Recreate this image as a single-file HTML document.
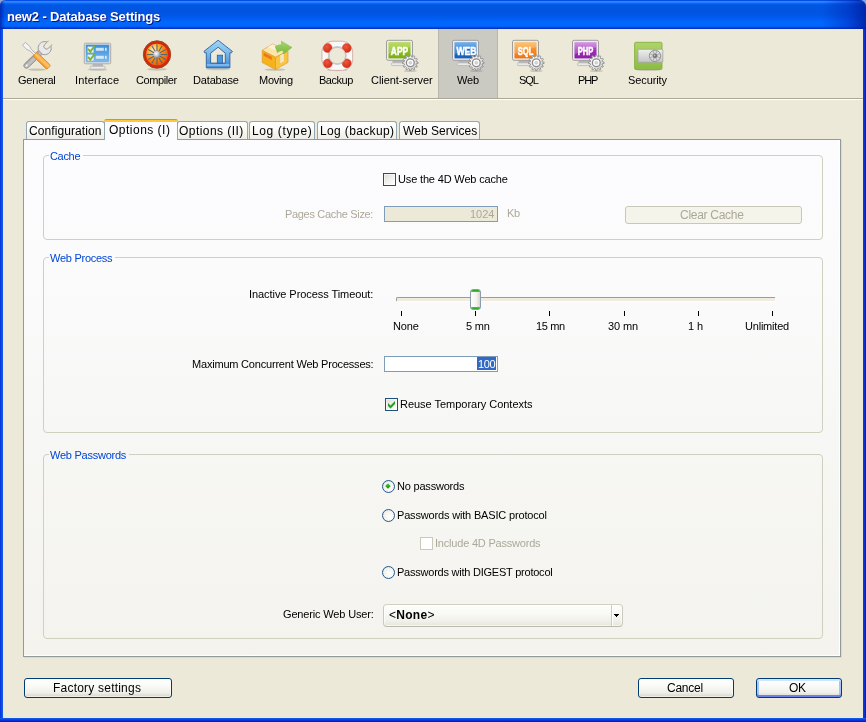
<!DOCTYPE html>
<html><head><meta charset="utf-8"><title>new2 - Database Settings</title>
<style>
html,body{margin:0;padding:0;}
body{width:866px;height:722px;position:relative;overflow:hidden;background:#ECE9D8;font-family:"Liberation Sans",sans-serif;}
.abs,.t{position:absolute;}
.t{white-space:nowrap;line-height:16px;height:16px;will-change:transform;}
.t span{display:inline-block;}
#title{left:0;top:0;width:866px;height:29px;border-radius:6px 6px 0 0;
 background:linear-gradient(180deg,#0046E0 0px,#0A55E8 1px,#3A90FF 1.6px,#2480FF 2.4px,#0A6CF8 3.2px,#0060EE 4px,#0056E2 5.5px,#0054E0 13px,#0059EC 17px,#0062F8 20px,#0066FC 22px,#0066FC 26.2px,#0050E4 27.2px,#0034C8 28.2px,#0030C4 29px);}
#titleR{left:822px;top:0;width:44px;height:29px;border-radius:0 7px 0 0;background:linear-gradient(90deg,rgba(0,40,190,0) 0%,rgba(0,40,185,.5) 60%,rgba(0,30,160,.85) 100%);}
#titleL{left:0;top:0;width:5px;height:29px;border-radius:7px 0 0 0;background:linear-gradient(90deg,rgba(0,30,170,.8),rgba(0,40,190,0));}
#bl{left:0;top:29px;width:3px;height:693px;background:linear-gradient(90deg,#0831D9,#0A4BE4 50%,#1660E8);}
#br{left:863px;top:29px;width:3px;height:693px;background:linear-gradient(90deg,#0A3FD8,#0831D9 50%,#001EA0);}
#bb{left:0;top:718px;width:866px;height:4px;background:linear-gradient(180deg,#1660E8,#0A4BE4 30%,#0831D9 60%,#001EA0);}
#sep1{left:3px;top:98px;width:860px;height:1px;background:#ACA899;}
#sep2{left:3px;top:99px;width:860px;height:1px;background:#fff;}
#sel{left:438px;top:29px;width:60px;height:69px;background:#CBCAC2;box-shadow:inset 1px 0 0 #B8B7AE,inset -1px 0 0 #B8B7AE;}
.ico{position:absolute;top:40px;width:32px;height:32px;overflow:visible;}
/* tabs */
.tab{position:absolute;top:121px;height:19px;box-sizing:border-box;border:1px solid #91A7B4;border-bottom:none;border-radius:3px 3px 0 0;
 background:linear-gradient(180deg,#FFFFFF 0%,#FBFBF8 40%,#F1F0EA 80%,#ECEBE5 100%);}
.tab.act{top:119px;height:21px;background:#FCFCFE;border-top:none;z-index:3;}
.tab.act:before{content:"";position:absolute;left:-1px;right:-1px;top:0;height:3px;border-radius:3px 3px 0 0;
 background:linear-gradient(180deg,#E68B2C 0,#E68B2C 33%,#FFC73C 34%,#FFC73C 100%);}
#panel{left:23px;top:139px;width:818px;height:518px;box-sizing:border-box;border:1px solid #919B9C;
 background:linear-gradient(180deg,#FCFCFE 0%,#FBFBFC 25%,#F7F7F5 55%,#F4F3EE 100%);z-index:2;box-shadow:inset -1px -1px 0 #fff,1px 1px 0 rgba(120,110,80,.12);}
.grp{position:absolute;left:43px;width:780px;box-sizing:border-box;border:1px solid #D0D0BF;border-radius:4px;z-index:2;}
.gl{position:absolute;height:3px;z-index:2;}
.z{z-index:4;}
.t{z-index:5;}
.cb{position:absolute;width:13px;height:13px;box-sizing:border-box;border:1px solid #1C5180;
 background:linear-gradient(135deg,#DCDCD7 0%,#F0F0EC 50%,#FFFFFF 100%);z-index:4;box-shadow:inset 0 0 0 1px rgba(255,255,255,.55);}
.cb.dis{border-color:#CAC8BB;background:#fff;}
.rb{position:absolute;width:13px;height:13px;box-sizing:border-box;border:1px solid #24578C;border-radius:50%;
 background:radial-gradient(circle at 60% 60%,#FFFFFF 0%,#F4F4F0 50%,#DCDCD7 100%);z-index:4;}
.inp{position:absolute;box-sizing:border-box;border:1px solid #7F9DB9;background:#fff;z-index:4;}
.btn{position:absolute;box-sizing:border-box;border:1px solid #003C74;border-radius:3px;z-index:4;
 background:linear-gradient(180deg,#FFFFFF 0%,#FBFBF9 30%,#F0F0EA 75%,#E3E0D5 90%,#D6D0C5 100%);box-shadow:inset 0 0 0 1px rgba(255,255,255,.6);}
.btn.def{box-shadow:inset 0 2px 0 #CEE7FF,inset 0 -2px 0 #6982EE,inset 2px 0 0 #A9C4F2,inset -2px 0 0 #A9C4F2;}
.btn.dis{border-color:#C9C7BA;background:#F5F4EA;box-shadow:none;}
.crn{position:absolute;top:0;width:6px;height:6px;background:#8FA4D6;}

</style></head><body>
<div class="crn" style="left:0"></div><div class="crn" style="left:860px"></div><div id="title" class="abs"></div><div id="titleR" class="abs"></div><div id="titleL" class="abs"></div>
<div id="bl" class="abs"></div><div id="br" class="abs"></div><div id="bb" class="abs"></div>
<div id="sel" class="abs"></div>
<div id="sep1" class="abs"></div><div id="sep2" class="abs"></div>
<svg class="abs" id="icons" width="866" height="100" viewBox="0 0 866 100" style="left:0;top:0;z-index:1;will-change:transform"><defs>
<linearGradient id="gGear" x1="0" y1="0" x2="1" y2="1"><stop offset="0" stop-color="#FFFFFF"/><stop offset=".6" stop-color="#E6E6E6"/><stop offset="1" stop-color="#BEBEBE"/></linearGradient>
<linearGradient id="gApp" x1="0" y1="0" x2="0" y2="1"><stop offset="0" stop-color="#A6D233"/><stop offset=".5" stop-color="#8FBE1E"/><stop offset="1" stop-color="#7BAE14"/></linearGradient>
<linearGradient id="gWeb" x1="0" y1="0" x2="0" y2="1"><stop offset="0" stop-color="#4A9AE8"/><stop offset=".45" stop-color="#2070C8"/><stop offset="1" stop-color="#185EB4"/></linearGradient>
<linearGradient id="gSql" x1="0" y1="0" x2="0" y2="1"><stop offset="0" stop-color="#FBB347"/><stop offset=".5" stop-color="#F58A22"/><stop offset="1" stop-color="#EE7414"/></linearGradient>
<linearGradient id="gPhp" x1="0" y1="0" x2="0" y2="1"><stop offset="0" stop-color="#C77BDC"/><stop offset=".5" stop-color="#A030B8"/><stop offset="1" stop-color="#8E1CA8"/></linearGradient>
<linearGradient id="gScr" x1="0" y1="0" x2="0" y2="1"><stop offset="0" stop-color="#3A8EDC"/><stop offset="1" stop-color="#7DBAEA"/></linearGradient>
<linearGradient id="gHouse" x1="0" y1="0" x2="0" y2="1"><stop offset="0" stop-color="#9FD6F6"/><stop offset=".45" stop-color="#7CBBEC"/><stop offset="1" stop-color="#3B86D4"/></linearGradient>
<linearGradient id="gOr" x1="0" y1="0" x2="1" y2="0"><stop offset="0" stop-color="#F7A23A"/><stop offset=".5" stop-color="#FFBE62"/><stop offset="1" stop-color="#F09020"/></linearGradient>
<linearGradient id="gWr" x1="0" y1="0" x2="0" y2="1"><stop offset="0" stop-color="#B4B4B4"/><stop offset=".5" stop-color="#C6C6C6"/><stop offset="1" stop-color="#9A9A9A"/></linearGradient>
<radialGradient id="gComp" cx=".36" cy=".3" r=".8"><stop offset="0" stop-color="#FFEEDC"/><stop offset=".25" stop-color="#FFC040"/><stop offset=".5" stop-color="#FC8A0C"/><stop offset="1" stop-color="#E84A04"/></radialGradient>
<radialGradient id="gBall" cx=".4" cy=".35" r=".7"><stop offset="0" stop-color="#FFFFFF"/><stop offset=".5" stop-color="#C8CCD0"/><stop offset="1" stop-color="#70787E"/></radialGradient>
<linearGradient id="gSec" x1="0" y1="0" x2="0" y2="1"><stop offset="0" stop-color="#AED468"/><stop offset="1" stop-color="#8CBC44"/></linearGradient>
<linearGradient id="gSafe" x1="0" y1="0" x2="0" y2="1"><stop offset="0" stop-color="#F0F0F0"/><stop offset="1" stop-color="#C4C4C4"/></linearGradient>
<linearGradient id="gArrow" x1="0" y1="0" x2="0" y2="1"><stop offset="0" stop-color="#A5D66C"/><stop offset="1" stop-color="#78B83E"/></linearGradient>
<radialGradient id="gRed" cx=".4" cy=".35" r=".8"><stop offset="0" stop-color="#F0553C"/><stop offset="1" stop-color="#C8240E"/></radialGradient>
<linearGradient id="gOrV" x1="0" y1="0" x2="0" y2="1"><stop offset="0" stop-color="#F9A840"/><stop offset=".45" stop-color="#FFC46C"/><stop offset="1" stop-color="#F08C1C"/></linearGradient></defs><ellipse cx="37" cy="69.6" rx="9" ry="1.2" fill="#6b6858" opacity=".3"/><g transform="rotate(-45 44.4 48.4)"></g><g transform="translate(44.4 48.4) rotate(136.2)"><rect x="3" y="-2.6" width="24.5" height="5.2" rx="2.6" fill="url(#gWr)" stroke="#8A8A8A" stroke-width=".8"/><circle cx="24.6" cy="0" r="1.1" fill="#F2F2F2"/><path d="M5.5 -3 A6.6 6.6 0 1 0 5.5 3 Z" fill="#E9E9E9" stroke="#9A9A9A" stroke-width=".9"/><path d="M-8 -2.6 L-2.2 -2.6 A2.7 2.7 0 0 1 -2.2 2.6 L-8 2.6 Z" fill="#ECE9D8" stroke="#9A9A9A" stroke-width=".9"/><rect x="-9" y="-2.1" width="3.2" height="4.2" fill="#ECE9D8"/></g><g transform="translate(24 43.8) rotate(43.7)"><path d="M0 -2.1 L6 -2.1 L9 -1 L16 -1 L16 1 L9 1 L6 2.1 L0 2.1 Z" fill="#F4F4F4" stroke="#A8A8A8" stroke-width=".8"/><rect x="15" y="-2.8" width="19.3" height="5.6" rx="1.6" fill="url(#gOrV)" stroke="#E48A1E" stroke-width=".8"/></g><ellipse cx="97.5" cy="69.6" rx="10" ry="1.2" fill="#6b6858" opacity=".28"/><rect x="92.5" y="64" width="10.5" height="3" fill="#B8B8B8"/><rect x="90.2" y="66.3" width="14.8" height="2.8" rx=".8" fill="#ECECEC" stroke="#ADADAD" stroke-width=".7"/><rect x="84.3" y="43.2" width="26.4" height="20.6" rx="1" fill="#E4E0DC" stroke="#B3AAA4" stroke-width="1"/><rect x="85.8" y="44.7" width="23.4" height="17.6" fill="url(#gScr)"/><rect x="87.6" y="46.6" width="6" height="6" fill="#F2F2F2"/><path d="M88 48.800000000000004 L90.3 51.6 L94.6 46.0" fill="none" stroke="#7DB432" stroke-width="1.9"/><rect x="95.8" y="47.800000000000004" width="8" height="3" fill="#fff" opacity=".72"/><rect x="105" y="47.800000000000004" width="1.6" height="3" fill="#fff" opacity=".8"/><rect x="87.6" y="54.6" width="6" height="6" fill="#F2F2F2"/><path d="M88 56.800000000000004 L90.3 59.6 L94.6 54.0" fill="none" stroke="#7DB432" stroke-width="1.9"/><rect x="95.8" y="55.800000000000004" width="8" height="3" fill="#fff" opacity=".72"/><rect x="105" y="55.800000000000004" width="1.6" height="3" fill="#fff" opacity=".8"/><ellipse cx="157" cy="69.3" rx="10" ry="1.4" fill="#6b6858" opacity=".28"/><circle cx="157" cy="54.5" r="13.7" fill="#B83608" stroke="#A8441A" stroke-width="1"/><circle cx="157" cy="54.5" r="11.6" fill="url(#gComp)" stroke="#E2201A" stroke-width="1.5"/><line x1="160.40" y1="54.50" x2="167.20" y2="54.50" stroke="#56687A" stroke-width="1.15"/><line x1="159.94" y1="56.20" x2="165.83" y2="59.60" stroke="#56687A" stroke-width="1.15"/><line x1="158.70" y1="57.44" x2="162.10" y2="63.33" stroke="#56687A" stroke-width="1.15"/><line x1="157.00" y1="57.90" x2="157.00" y2="64.70" stroke="#56687A" stroke-width="1.15"/><line x1="155.30" y1="57.44" x2="151.90" y2="63.33" stroke="#56687A" stroke-width="1.15"/><line x1="154.06" y1="56.20" x2="148.17" y2="59.60" stroke="#56687A" stroke-width="1.15"/><line x1="153.60" y1="54.50" x2="146.80" y2="54.50" stroke="#56687A" stroke-width="1.15"/><line x1="154.06" y1="52.80" x2="148.17" y2="49.40" stroke="#56687A" stroke-width="1.15"/><line x1="155.30" y1="51.56" x2="151.90" y2="45.67" stroke="#56687A" stroke-width="1.15"/><line x1="157.00" y1="51.10" x2="157.00" y2="44.30" stroke="#56687A" stroke-width="1.15"/><line x1="158.70" y1="51.56" x2="162.10" y2="45.67" stroke="#56687A" stroke-width="1.15"/><line x1="159.94" y1="52.80" x2="165.83" y2="49.40" stroke="#56687A" stroke-width="1.15"/><circle cx="156.8" cy="54.6" r="3.3" fill="url(#gBall)"/><ellipse cx="218" cy="69" rx="12" ry="1.3" fill="#6b6858" opacity=".25"/><path fill-rule="evenodd" d="M218.1 40.2 L232.4 51.4 L231.5 52.8 L229.9 52.8 L229.9 67.8 L206.3 67.8 L206.3 52.8 L204.7 52.8 L203.9 51.4 Z M218.1 47.2 L210.6 53.2 L210.6 63.1 L225.3 63.1 L225.3 53.2 Z" fill="url(#gHouse)" stroke="#2F5F9F" stroke-width=".9" stroke-linejoin="round"/><rect x="206.9" y="64" width="22.4" height="2.2" fill="#8CC4F0" opacity=".75"/><rect x="217.3" y="55.2" width="5.3" height="7.9" fill="#4C98DE" stroke="#2F5F9F" stroke-width=".8"/><ellipse cx="275" cy="69.6" rx="10.5" ry="1.2" fill="#6b6858" opacity=".3"/><path d="M262.2 50.4 L272.6 44 L288 51 L275.5 57.3 Z" fill="#FBE6A8" stroke="#D9972A" stroke-width=".6"/><path d="M267.6 47.2 L272.6 44.2 L285 50 L280.3 52.5 Z" fill="#FBF0DA"/><path d="M262.2 50.4 L275.5 57.3 L275.5 69.6 L262.2 62.6 Z" fill="#F6B21C" stroke="#DE9622" stroke-width=".6"/><path d="M275.5 57.3 L288 51 L288 62.4 L275.5 69.6 Z" fill="#F9C440" stroke="#DE9622" stroke-width=".6"/><path d="M263.6 52.6 L271.8 56.8 L271.8 60 L263.6 55.8 Z" fill="#F0761C"/><path d="M280.2 55.2 L283.8 53.4 L283.8 61.4 L280.2 63.2 Z" fill="#F1E6CC"/><path d="M275.2 46.6 Q278 44.6 281.6 44.8 L281.4 41.2 L292 47.4 L283.4 54 L283 50.4 Q279.4 50.6 277.4 52.6 Z" fill="url(#gArrow)" stroke="#86BE54" stroke-width=".6"/><ellipse cx="337.5" cy="70" rx="10" ry="1.2" fill="#6b6858" opacity=".28"/><path fill-rule="evenodd" d="M332 41.2 H342.6 Q348 41.8 350.6 45.4 Q352.6 48.4 352.7 52 V59.6 Q352.4 63.6 350.4 66.4 Q347.6 70 342.6 70.4 H332 Q327 70 324.2 66.4 Q322.2 63.6 321.9 59.6 V52 Q322 48.4 324 45.4 Q326.6 41.8 332 41.2 Z M337.3 47.3 A8.3 8.3 0 1 0 337.31 47.3 Z" fill="#F8F8F8" stroke="#D2A8A0" stroke-width=".9"/><circle cx="337.3" cy="55.6" r="8.9" fill="none" stroke="#C4CACC" stroke-width="1.2"/><clipPath id="cpRing"><path clip-rule="evenodd" d="M332 41.2 H342.6 Q348 41.8 350.6 45.4 Q352.6 48.4 352.7 52 V59.6 Q352.4 63.6 350.4 66.4 Q347.6 70 342.6 70.4 H332 Q327 70 324.2 66.4 Q322.2 63.6 321.9 59.6 V52 Q322 48.4 324 45.4 Q326.6 41.8 332 41.2 Z M337.3 46.9 A8.7 8.7 0 1 0 337.31 46.9 Z"/></clipPath><g clip-path="url(#cpRing)"><circle cx="327.6" cy="48" r="4.5" fill="url(#gRed)" stroke="#DC5038" stroke-width=".6"/><circle cx="346.8" cy="48" r="4.5" fill="url(#gRed)" stroke="#DC5038" stroke-width=".6"/><circle cx="327.8" cy="63.4" r="4.5" fill="url(#gRed)" stroke="#DC5038" stroke-width=".6"/><circle cx="346.8" cy="63.4" r="4.5" fill="url(#gRed)" stroke="#DC5038" stroke-width=".6"/></g><rect x="392.5" y="60" width="12.5" height="3.2" fill="#B4B4B4"/><rect x="391.5" y="62.8" width="14" height="2.8" rx=".8" fill="#E9E9E9" stroke="#B0B0B0" stroke-width=".7"/><rect x="386.5" y="40.3" width="26" height="20" rx="1.6" fill="#EDEDED" stroke="#9E9E9E" stroke-width="1"/><rect x="388.5" y="42.2" width="22" height="16.2" fill="url(#gApp)"/><path d="M388.5 42.2 h22 v5 q-11 1.5 -22 7 Z" fill="#fff" opacity=".22"/><text x="399.5" y="54.6" font-family="Liberation Sans, sans-serif" font-weight="700" font-size="11.4" fill="#fff" stroke="#fff" stroke-width=".55" text-anchor="middle" textLength="17.3" lengthAdjust="spacingAndGlyphs">APP</text><ellipse cx="410.3" cy="71.0" rx="6.5" ry="1.1" fill="#6b6858" opacity=".28"/><path d="M416.32 61.85 L418.07 62.11 L418.07 63.49 L416.32 63.75 L415.99 64.99 L417.37 66.08 L416.68 67.29 L415.04 66.64 L414.14 67.54 L414.79 69.18 L413.58 69.87 L412.49 68.49 L411.25 68.82 L410.99 70.57 L409.61 70.57 L409.35 68.82 L408.11 68.49 L407.02 69.87 L405.81 69.18 L406.46 67.54 L405.56 66.64 L403.92 67.29 L403.23 66.08 L404.61 64.99 L404.28 63.75 L402.53 63.49 L402.53 62.11 L404.28 61.85 L404.61 60.61 L403.23 59.52 L403.92 58.31 L405.56 58.96 L406.46 58.06 L405.81 56.42 L407.02 55.73 L408.11 57.11 L409.35 56.78 L409.61 55.03 L410.99 55.03 L411.25 56.78 L412.49 57.11 L413.58 55.73 L414.79 56.42 L414.14 58.06 L415.04 58.96 L416.68 58.31 L417.37 59.52 L415.99 60.61Z" fill="url(#gGear)" stroke="#8E8E8E" stroke-width=".9" stroke-linejoin="round"/><circle cx="410.3" cy="62.8" r="3.9" fill="#FDFDFD" stroke="#8A8A8A" stroke-width="1.3"/><circle cx="410.3" cy="62.8" r="1.5" fill="#D6D6D2" stroke="#BDBDBD" stroke-width=".5"/><rect x="458.5" y="60" width="12.5" height="3.2" fill="#B4B4B4"/><rect x="457.5" y="62.8" width="14" height="2.8" rx=".8" fill="#E9E9E9" stroke="#B0B0B0" stroke-width=".7"/><rect x="452.5" y="40.3" width="26" height="20" rx="1.6" fill="#EDEDED" stroke="#9E9E9E" stroke-width="1"/><rect x="454.5" y="42.2" width="22" height="16.2" fill="url(#gWeb)"/><path d="M454.5 42.2 h22 v5 q-11 1.5 -22 7 Z" fill="#fff" opacity=".22"/><text x="466.5" y="54.6" font-family="Liberation Sans, sans-serif" font-weight="700" font-size="11.4" fill="#fff" stroke="#fff" stroke-width=".55" text-anchor="middle" textLength="20.2" lengthAdjust="spacingAndGlyphs">WEB</text><ellipse cx="476.3" cy="71.0" rx="6.5" ry="1.1" fill="#6b6858" opacity=".28"/><path d="M482.32 61.85 L484.07 62.11 L484.07 63.49 L482.32 63.75 L481.99 64.99 L483.37 66.08 L482.68 67.29 L481.04 66.64 L480.14 67.54 L480.79 69.18 L479.58 69.87 L478.49 68.49 L477.25 68.82 L476.99 70.57 L475.61 70.57 L475.35 68.82 L474.11 68.49 L473.02 69.87 L471.81 69.18 L472.46 67.54 L471.56 66.64 L469.92 67.29 L469.23 66.08 L470.61 64.99 L470.28 63.75 L468.53 63.49 L468.53 62.11 L470.28 61.85 L470.61 60.61 L469.23 59.52 L469.92 58.31 L471.56 58.96 L472.46 58.06 L471.81 56.42 L473.02 55.73 L474.11 57.11 L475.35 56.78 L475.61 55.03 L476.99 55.03 L477.25 56.78 L478.49 57.11 L479.58 55.73 L480.79 56.42 L480.14 58.06 L481.04 58.96 L482.68 58.31 L483.37 59.52 L481.99 60.61Z" fill="url(#gGear)" stroke="#8E8E8E" stroke-width=".9" stroke-linejoin="round"/><circle cx="476.3" cy="62.8" r="3.9" fill="#FDFDFD" stroke="#8A8A8A" stroke-width="1.3"/><circle cx="476.3" cy="62.8" r="1.5" fill="#D6D6D2" stroke="#BDBDBD" stroke-width=".5"/><rect x="518.5" y="60" width="12.5" height="3.2" fill="#B4B4B4"/><rect x="517.5" y="62.8" width="14" height="2.8" rx=".8" fill="#E9E9E9" stroke="#B0B0B0" stroke-width=".7"/><rect x="512.5" y="40.3" width="26" height="20" rx="1.6" fill="#EDEDED" stroke="#9E9E9E" stroke-width="1"/><rect x="514.5" y="42.2" width="22" height="16.2" fill="url(#gSql)"/><path d="M514.5 42.2 h22 v5 q-11 1.5 -22 7 Z" fill="#fff" opacity=".22"/><text x="525.5" y="54.6" font-family="Liberation Sans, sans-serif" font-weight="700" font-size="11.4" fill="#fff" stroke="#fff" stroke-width=".55" text-anchor="middle" textLength="15.6" lengthAdjust="spacingAndGlyphs">SQL</text><ellipse cx="536.3" cy="71.0" rx="6.5" ry="1.1" fill="#6b6858" opacity=".28"/><path d="M542.32 61.85 L544.07 62.11 L544.07 63.49 L542.32 63.75 L541.99 64.99 L543.37 66.08 L542.68 67.29 L541.04 66.64 L540.14 67.54 L540.79 69.18 L539.58 69.87 L538.49 68.49 L537.25 68.82 L536.99 70.57 L535.61 70.57 L535.35 68.82 L534.11 68.49 L533.02 69.87 L531.81 69.18 L532.46 67.54 L531.56 66.64 L529.92 67.29 L529.23 66.08 L530.61 64.99 L530.28 63.75 L528.53 63.49 L528.53 62.11 L530.28 61.85 L530.61 60.61 L529.23 59.52 L529.92 58.31 L531.56 58.96 L532.46 58.06 L531.81 56.42 L533.02 55.73 L534.11 57.11 L535.35 56.78 L535.61 55.03 L536.99 55.03 L537.25 56.78 L538.49 57.11 L539.58 55.73 L540.79 56.42 L540.14 58.06 L541.04 58.96 L542.68 58.31 L543.37 59.52 L541.99 60.61Z" fill="url(#gGear)" stroke="#8E8E8E" stroke-width=".9" stroke-linejoin="round"/><circle cx="536.3" cy="62.8" r="3.9" fill="#FDFDFD" stroke="#8A8A8A" stroke-width="1.3"/><circle cx="536.3" cy="62.8" r="1.5" fill="#D6D6D2" stroke="#BDBDBD" stroke-width=".5"/><rect x="578.5" y="60" width="12.5" height="3.2" fill="#B4B4B4"/><rect x="577.5" y="62.8" width="14" height="2.8" rx=".8" fill="#E9E9E9" stroke="#B0B0B0" stroke-width=".7"/><rect x="572.5" y="40.3" width="26" height="20" rx="1.6" fill="#EDEDED" stroke="#9E9E9E" stroke-width="1"/><rect x="574.5" y="42.2" width="22" height="16.2" fill="url(#gPhp)"/><path d="M574.5 42.2 h22 v5 q-11 1.5 -22 7 Z" fill="#fff" opacity=".22"/><text x="585.5" y="54.6" font-family="Liberation Sans, sans-serif" font-weight="700" font-size="11.4" fill="#fff" stroke="#fff" stroke-width=".55" text-anchor="middle" textLength="15.6" lengthAdjust="spacingAndGlyphs">PHP</text><ellipse cx="596.3" cy="71.0" rx="6.5" ry="1.1" fill="#6b6858" opacity=".28"/><path d="M602.32 61.85 L604.07 62.11 L604.07 63.49 L602.32 63.75 L601.99 64.99 L603.37 66.08 L602.68 67.29 L601.04 66.64 L600.14 67.54 L600.79 69.18 L599.58 69.87 L598.49 68.49 L597.25 68.82 L596.99 70.57 L595.61 70.57 L595.35 68.82 L594.11 68.49 L593.02 69.87 L591.81 69.18 L592.46 67.54 L591.56 66.64 L589.92 67.29 L589.23 66.08 L590.61 64.99 L590.28 63.75 L588.53 63.49 L588.53 62.11 L590.28 61.85 L590.61 60.61 L589.23 59.52 L589.92 58.31 L591.56 58.96 L592.46 58.06 L591.81 56.42 L593.02 55.73 L594.11 57.11 L595.35 56.78 L595.61 55.03 L596.99 55.03 L597.25 56.78 L598.49 57.11 L599.58 55.73 L600.79 56.42 L600.14 58.06 L601.04 58.96 L602.68 58.31 L603.37 59.52 L601.99 60.61Z" fill="url(#gGear)" stroke="#8E8E8E" stroke-width=".9" stroke-linejoin="round"/><circle cx="596.3" cy="62.8" r="3.9" fill="#FDFDFD" stroke="#8A8A8A" stroke-width="1.3"/><circle cx="596.3" cy="62.8" r="1.5" fill="#D6D6D2" stroke="#BDBDBD" stroke-width=".5"/><ellipse cx="648.5" cy="70" rx="12" ry="1.1" fill="#6b6858" opacity=".25"/><rect x="634.6" y="42.3" width="27.4" height="27.2" rx="1.2" fill="url(#gSec)" stroke="#84B040" stroke-width=".9"/><rect x="638" y="49.3" width="24.8" height="13" rx=".8" fill="url(#gSafe)" stroke="#A4A4A4" stroke-width=".8"/><circle cx="655" cy="55.8" r="5.7" fill="#DADADA" stroke="#8C8C8C" stroke-width=".9"/><line x1="657.40" y1="56.79" x2="659.80" y2="57.79" stroke="#9A9A9A" stroke-width=".8"/><line x1="655.99" y1="58.20" x2="656.99" y2="60.60" stroke="#9A9A9A" stroke-width=".8"/><line x1="654.01" y1="58.20" x2="653.01" y2="60.60" stroke="#9A9A9A" stroke-width=".8"/><line x1="652.60" y1="56.79" x2="650.20" y2="57.79" stroke="#9A9A9A" stroke-width=".8"/><line x1="652.60" y1="54.81" x2="650.20" y2="53.81" stroke="#9A9A9A" stroke-width=".8"/><line x1="654.01" y1="53.40" x2="653.01" y2="51.00" stroke="#9A9A9A" stroke-width=".8"/><line x1="655.99" y1="53.40" x2="656.99" y2="51.00" stroke="#9A9A9A" stroke-width=".8"/><line x1="657.40" y1="54.81" x2="659.80" y2="53.81" stroke="#9A9A9A" stroke-width=".8"/><circle cx="655" cy="55.8" r="2.1" fill="#7A7A7A" stroke="#5E5E5E" stroke-width=".5"/><circle cx="654.6" cy="55.4" r=".8" fill="#C8C8C8"/></svg>
<div class="tab" style="left:26px;width:79px"></div>
<div class="tab" style="left:177px;width:71px"></div>
<div class="tab" style="left:249px;width:66px"></div>
<div class="tab" style="left:317px;width:80px"></div>
<div class="tab" style="left:399px;width:81px"></div>
<div id="panel" class="abs"></div>
<div class="tab act" style="left:104px;width:74px"></div>
<!-- groups -->
<div class="grp" style="top:155px;height:85px"></div>
<div class="grp" style="top:257px;height:176px"></div>
<div class="grp" style="top:454px;height:185px"></div>
<div class="gl" style="left:49px;top:154px;width:34px;background:#FCFCFE"></div>
<div class="gl" style="left:49px;top:256px;width:66px;background:#FAFAFA"></div>
<div class="gl" style="left:49px;top:453px;width:80px;background:#F6F5F1"></div>
<!-- cache -->
<div class="cb" style="left:383px;top:173px"></div>
<div class="inp" style="left:384px;top:206px;width:114px;height:16px;background:#ECE9D8;border-color:#7F9DB9"></div>
<div class="btn dis" style="left:625px;top:206px;width:177px;height:18px"></div>
<!-- slider -->
<div class="abs z" style="left:396px;top:297px;width:380px;height:5px;box-sizing:border-box;border:1px solid #9D9C99;border-right-color:#fff;border-bottom-color:#fff;border-radius:2px;background:#F0EDE0"></div>
<div class="abs z" id="thumb" style="left:470px;top:289px;width:11px;height:21px;box-sizing:border-box;border:1px solid #8C9CA8;border-radius:3px;background:linear-gradient(90deg,#FFFFFF,#F4F3EE 60%,#D8D6CC);overflow:hidden">
 <div style="position:absolute;left:0;right:0;top:0;height:2.4px;background:linear-gradient(180deg,#1FA41F,#48C848)"></div>
 <div style="position:absolute;left:0;right:0;bottom:0;height:2.4px;background:linear-gradient(0deg,#1FA41F,#48C848)"></div>
</div>
<div class="abs z" style="left:401px;top:311px;width:1px;height:5px;background:#000"></div>
<div class="abs z" style="left:475px;top:311px;width:1px;height:5px;background:#000"></div>
<div class="abs z" style="left:549px;top:311px;width:1px;height:5px;background:#000"></div>
<div class="abs z" style="left:624px;top:311px;width:1px;height:5px;background:#000"></div>
<div class="abs z" style="left:698px;top:311px;width:1px;height:5px;background:#000"></div>
<div class="abs z" style="left:772px;top:311px;width:1px;height:5px;background:#000"></div>
<!-- max processes -->
<div class="inp" style="left:384px;top:356px;width:114px;height:16px"></div>
<div class="abs z" style="left:477px;top:357px;width:18.5px;height:13px;background:#316AC5"></div>
<div class="cb" style="left:385px;top:398px"><svg width="11" height="11" viewBox="0 0 11 11" style="position:absolute;left:0;top:0"><path d="M2 4 L4.5 6.5 L9 2 L9 5 L4.5 9.5 L2 7 Z" fill="#21A121"/></svg></div>
<!-- passwords -->
<div class="rb" style="left:382px;top:480px"><div style="position:absolute;left:3.4px;top:3.2px;width:4px;height:4px;border-radius:.8px;transform:rotate(45deg);background:linear-gradient(135deg,#58DA54,#22A522 60%,#168A16)"></div></div>
<div class="rb" style="left:382px;top:509px"></div>
<div class="cb dis" style="left:420px;top:537px"></div>
<div class="rb" style="left:382px;top:566px"></div>
<div class="btn" style="left:383px;top:604px;width:240px;height:23px;border-color:#D2D0C4 #CCCABE #BCBAAC #CCCABE;border-radius:4px;background:linear-gradient(180deg,#FEFEFC 0%,#F8F8F4 45%,#F0EFE8 80%,#E6E4DA 100%)"></div>
<div class="abs z" style="left:611px;top:605px;width:1px;height:21px;background:#CFCDC2"></div><div class="abs z" style="left:612px;top:605px;width:1px;height:21px;background:#fff"></div>
<div class="abs z" style="left:614px;top:614px;width:5px;height:1px;background:#000"></div><div class="abs z" style="left:615px;top:615px;width:3px;height:1px;background:#000"></div><div class="abs z" style="left:616px;top:616px;width:1px;height:1px;background:#000"></div>
<!-- bottom buttons -->
<div class="btn" style="left:24px;top:678px;width:148px;height:20px"></div>
<div class="btn" style="left:638px;top:678px;width:96px;height:20px"></div>
<div class="btn def" style="left:756px;top:678px;width:86px;height:20px"></div>

<div class='t' style='top:8.50px;font-size:13px;color:#fff;letter-spacing:-0.149px;font-weight:700;text-shadow:1px 1px 0 #0A1883;left:7.10px;'><span id='t0'>new2 - Database Settings</span></div>
<div class='t' style='top:72.19px;font-size:11px;color:#000;letter-spacing:-0.220px;left:18.30px;'><span id='t1'>General</span></div>
<div class='t' style='top:72.19px;font-size:11px;color:#000;letter-spacing:0.154px;left:75.10px;'><span id='t2'>Interface</span></div>
<div class='t' style='top:72.19px;font-size:11px;color:#000;letter-spacing:-0.402px;left:136.20px;'><span id='t3'>Compiler</span></div>
<div class='t' style='top:72.19px;font-size:11px;color:#000;letter-spacing:-0.162px;left:193.30px;'><span id='t4'>Database</span></div>
<div class='t' style='top:72.19px;font-size:11px;color:#000;letter-spacing:-0.278px;left:259.30px;'><span id='t5'>Moving</span></div>
<div class='t' style='top:72.19px;font-size:11px;color:#000;letter-spacing:-0.484px;left:319.30px;'><span id='t6'>Backup</span></div>
<div class='t' style='top:72.19px;font-size:11px;color:#000;letter-spacing:-0.051px;left:371.30px;'><span id='t7'>Client-server</span></div>
<div class='t' style='top:72.19px;font-size:11px;color:#000;letter-spacing:-0.107px;left:456.50px;'><span id='t8'>Web</span></div>
<div class='t' style='top:72.19px;font-size:11px;color:#000;letter-spacing:-1.072px;left:518.50px;'><span id='t9'>SQL</span></div>
<div class='t' style='top:72.19px;font-size:11px;color:#000;letter-spacing:-1.142px;left:578.20px;'><span id='t10'>PHP</span></div>
<div class='t' style='top:72.19px;font-size:11px;color:#000;letter-spacing:-0.106px;left:628.40px;'><span id='t11'>Security</span></div>
<div class='t' style='top:122.84px;font-size:12px;color:#000;letter-spacing:0.078px;left:29.10px;'><span id='t12'>Configuration</span></div>
<div class='t' style='top:121.84px;font-size:12px;color:#000;letter-spacing:0.489px;left:109.10px;'><span id='t13'>Options (I)</span></div>
<div class='t' style='top:122.84px;font-size:12px;color:#000;letter-spacing:0.453px;left:179.30px;'><span id='t14'>Options (II)</span></div>
<div class='t' style='top:122.84px;font-size:12px;color:#000;letter-spacing:0.627px;left:251.60px;'><span id='t15'>Log (type)</span></div>
<div class='t' style='top:122.84px;font-size:12px;color:#000;letter-spacing:0.363px;left:319.80px;'><span id='t16'>Log (backup)</span></div>
<div class='t' style='top:122.84px;font-size:12px;color:#000;letter-spacing:0.049px;left:402.60px;'><span id='t17'>Web Services</span></div>
<div class='t' style='top:148.19px;font-size:11px;color:#0046D5;letter-spacing:-0.319px;left:50.20px;'><span id='t18'>Cache</span></div>
<div class='t' style='top:250.19px;font-size:11px;color:#0046D5;letter-spacing:-0.265px;left:50.10px;'><span id='t19'>Web Process</span></div>
<div class='t' style='top:447.19px;font-size:11px;color:#0046D5;letter-spacing:-0.245px;left:50.20px;'><span id='t20'>Web Passwords</span></div>
<div class='t' style='top:171.19px;font-size:11px;color:#000;letter-spacing:-0.156px;left:398.20px;'><span id='t21'>Use the 4D Web cache</span></div>
<div class='t' style='top:206.19px;font-size:11px;color:#ACA899;letter-spacing:-0.321px;left:285.00px;'><span id='t22'>Pages Cache Size:</span></div>
<div class='t' style='top:206.19px;font-size:11px;color:#ACA899;letter-spacing:0.000px;right:372.00px;'><span id='t23'>1024</span></div>
<div class='t' style='top:205.19px;font-size:11px;color:#ACA899;letter-spacing:-0.384px;left:507.10px;'><span id='t24'>Kb</span></div>
<div class='t' style='top:206.84px;font-size:12px;color:#ACA899;letter-spacing:-0.282px;left:680.20px;'><span id='t25'>Clear Cache</span></div>
<div class='t' style='top:286.19px;font-size:11px;color:#000;letter-spacing:-0.066px;left:249.00px;'><span id='t26'>Inactive Process Timeout:</span></div>
<div class='t' style='top:318.19px;font-size:11px;color:#000;letter-spacing:-0.174px;left:392.70px;'><span id='t27'>None</span></div>
<div class='t' style='top:318.19px;font-size:11px;color:#000;letter-spacing:-0.217px;left:465.90px;'><span id='t28'>5 mn</span></div>
<div class='t' style='top:318.19px;font-size:11px;color:#000;letter-spacing:-0.376px;left:535.80px;'><span id='t29'>15 mn</span></div>
<div class='t' style='top:318.19px;font-size:11px;color:#000;letter-spacing:-0.136px;left:608.10px;'><span id='t30'>30 mn</span></div>
<div class='t' style='top:318.19px;font-size:11px;color:#000;letter-spacing:-0.132px;left:687.90px;'><span id='t31'>1 h</span></div>
<div class='t' style='top:318.19px;font-size:11px;color:#000;letter-spacing:-0.207px;left:744.70px;'><span id='t32'>Unlimited</span></div>
<div class='t' style='top:356.19px;font-size:11px;color:#000;letter-spacing:-0.200px;left:191.80px;'><span id='t33'>Maximum Concurrent Web Processes:</span></div>
<div class='t' style='top:356.19px;font-size:11px;color:#fff;letter-spacing:-0.353px;left:477.50px;'><span id='t34'>100</span></div>
<div class='t' style='top:396.19px;font-size:11px;color:#000;letter-spacing:-0.025px;left:400.20px;'><span id='t35'>Reuse Temporary Contexts</span></div>
<div class='t' style='top:478.19px;font-size:11px;color:#000;letter-spacing:-0.200px;left:397.20px;'><span id='t36'>No passwords</span></div>
<div class='t' style='top:507.19px;font-size:11px;color:#000;letter-spacing:-0.168px;left:397.20px;'><span id='t37'>Passwords with BASIC protocol</span></div>
<div class='t' style='top:535.19px;font-size:11px;color:#ACA899;letter-spacing:-0.203px;left:435.30px;'><span id='t38'>Include 4D Passwords</span></div>
<div class='t' style='top:564.19px;font-size:11px;color:#000;letter-spacing:-0.231px;left:397.20px;'><span id='t39'>Passwords with DIGEST protocol</span></div>
<div class='t' style='top:605.69px;font-size:11px;color:#000;letter-spacing:-0.155px;left:282.70px;'><span id='t40'>Generic Web User:</span></div>
<div class='t' style='top:607.44px;font-size:12px;color:#000;letter-spacing:0.278px;left:389.10px;'><span id='t41'>&lt;<b>None</b>&gt;</span></div>
<div class='t' style='top:679.84px;font-size:12px;color:#000;letter-spacing:0.212px;left:52.60px;'><span id='t42'>Factory settings</span></div>
<div class='t' style='top:679.84px;font-size:12px;color:#000;letter-spacing:-0.260px;left:667.00px;'><span id='t43'>Cancel</span></div>
<div class='t' style='top:679.84px;font-size:12px;color:#000;letter-spacing:-0.422px;left:789.10px;'><span id='t44'>OK</span></div>
</body></html>
